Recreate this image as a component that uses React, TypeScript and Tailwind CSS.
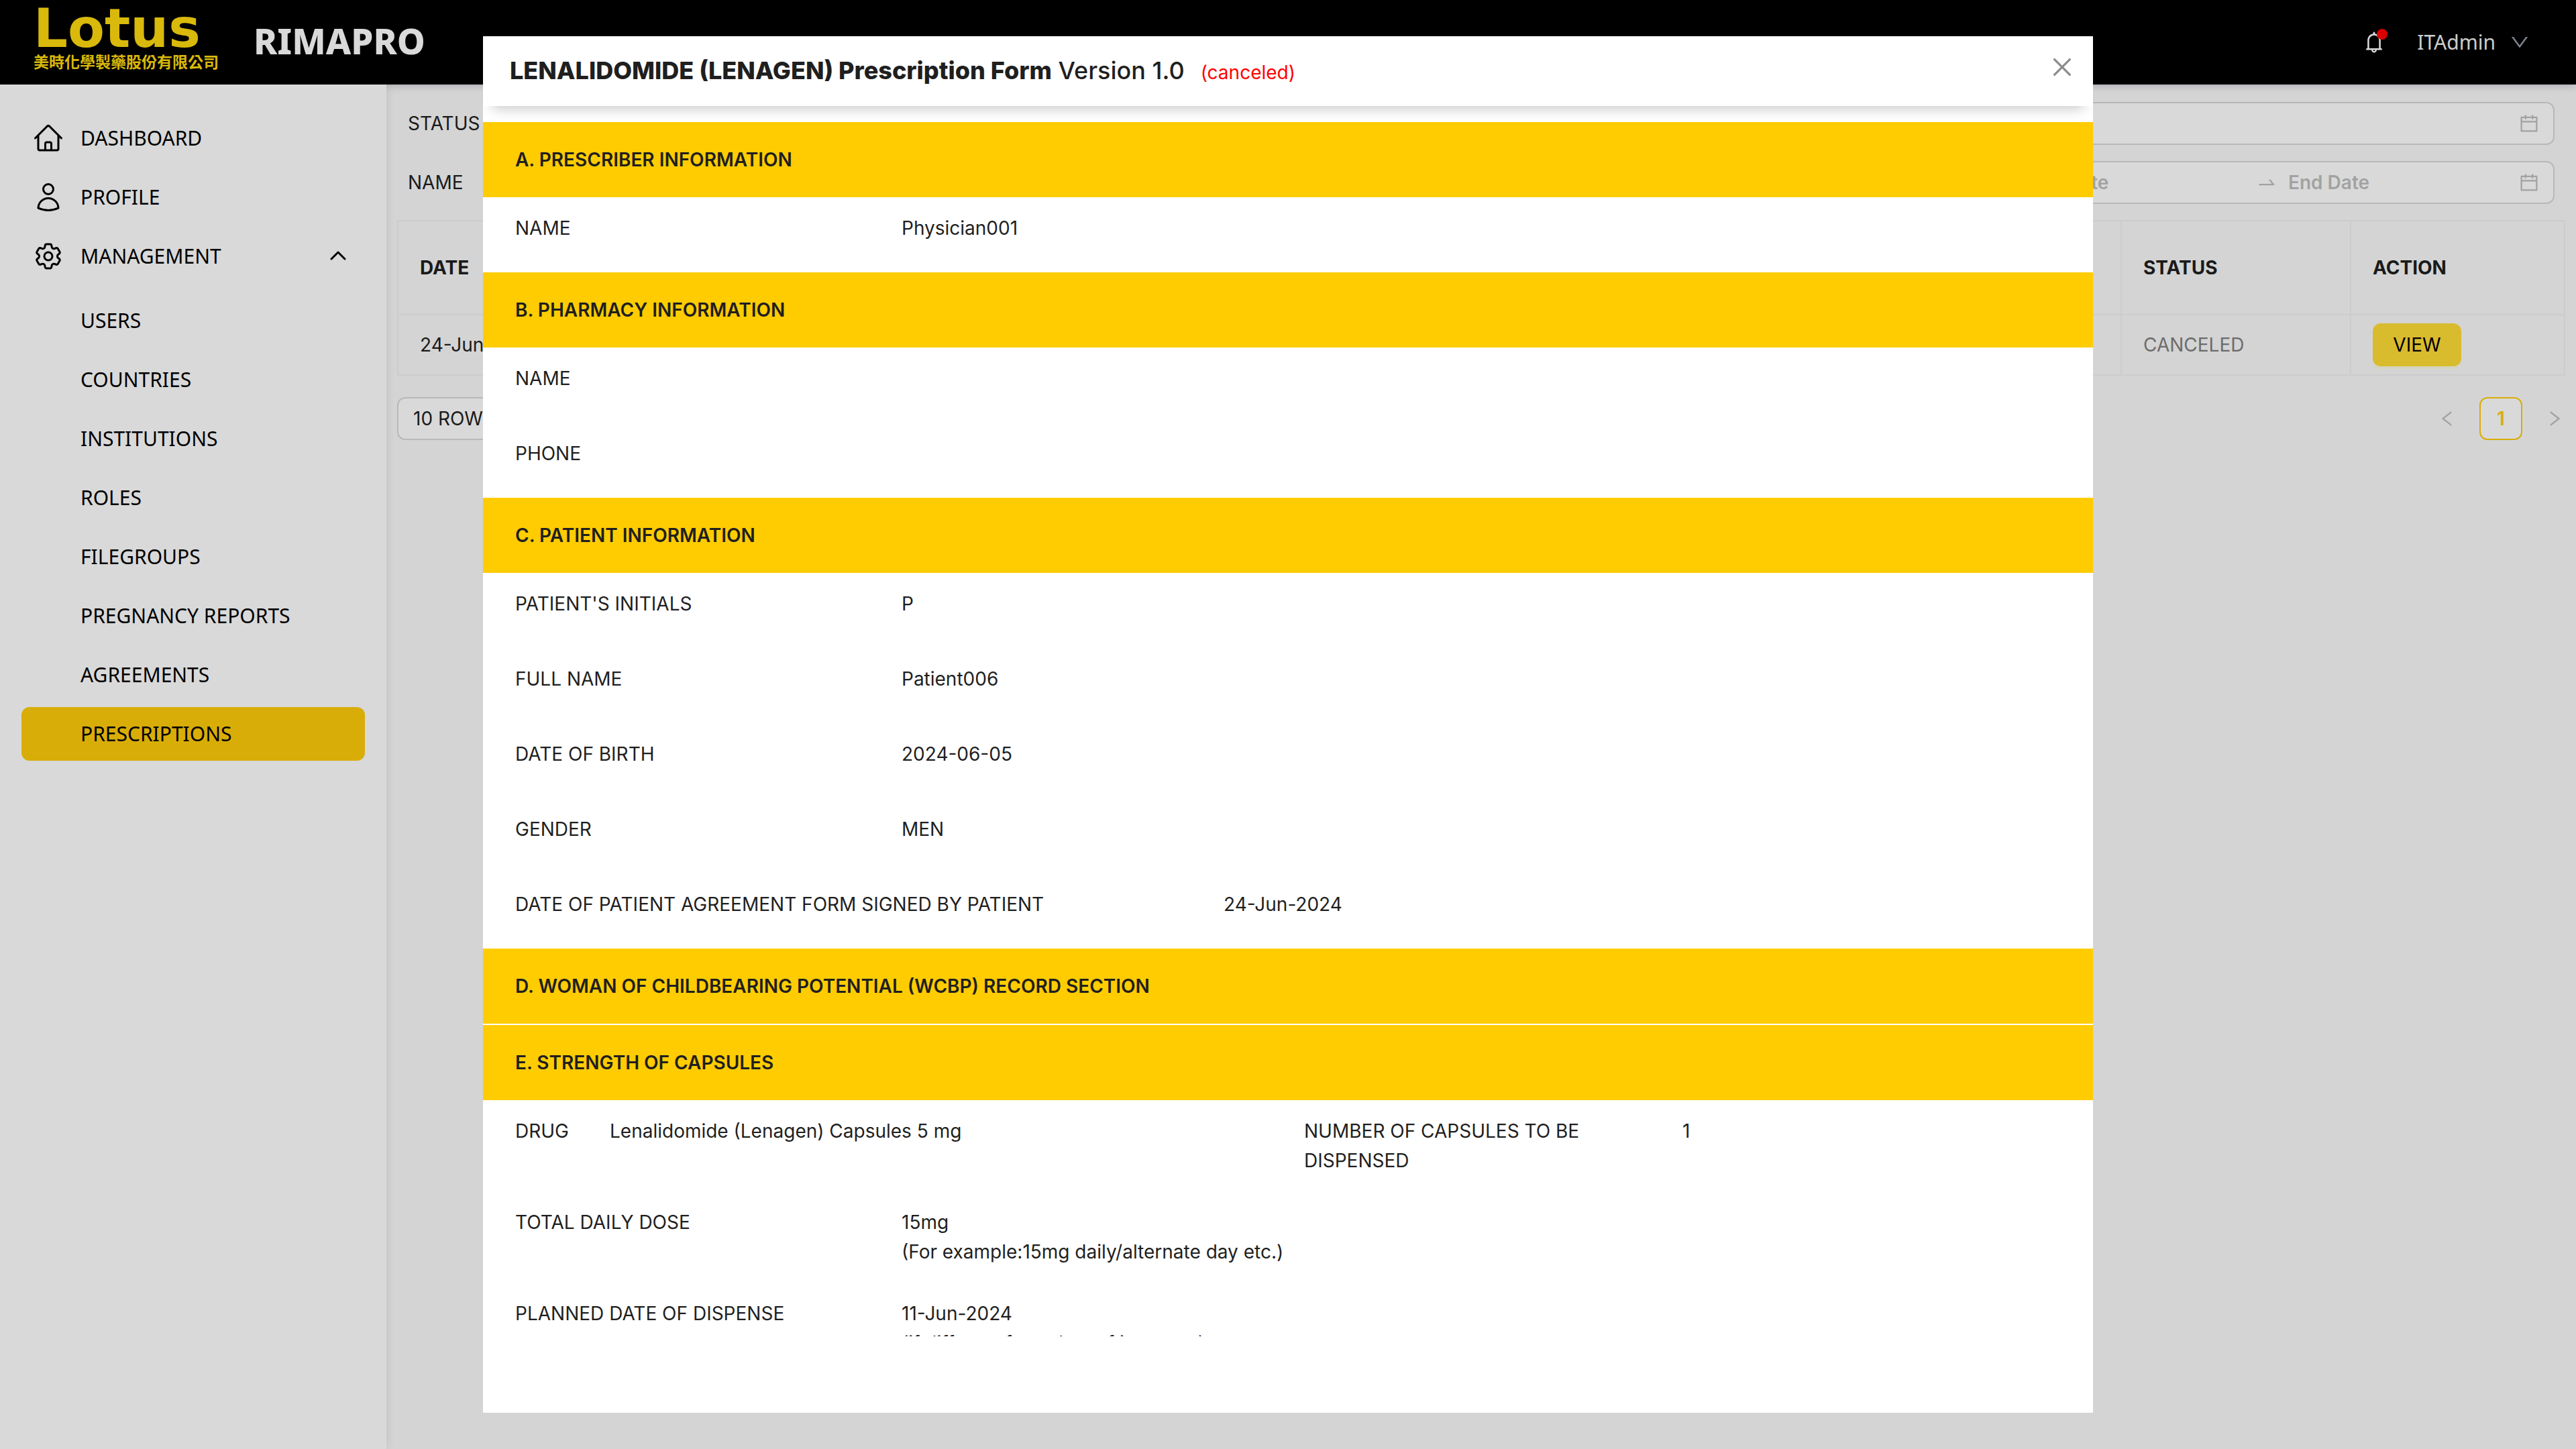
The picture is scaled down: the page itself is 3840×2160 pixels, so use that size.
import type { ReactNode } from "react";
import {
  HiOutlineHome,
  HiOutlineUser,
  HiOutlineCog6Tooth,
} from "react-icons/hi2";
import {
  AiOutlineBell,
  AiOutlineCalendar,
  AiOutlineClose,
  AiOutlineDown,
  AiOutlineLeft,
  AiOutlineRight,
  AiOutlineSwapRight,
} from "react-icons/ai";

const SUBMENU = [
  "USERS",
  "COUNTRIES",
  "INSTITUTIONS",
  "ROLES",
  "FILEGROUPS",
  "PREGNANCY REPORTS",
  "AGREEMENTS",
  "PRESCRIPTIONS",
];

function Header() {
  return (
    <header className="flex h-[126px] shrink-0 items-center justify-between bg-black pr-[68px] pl-[50px] font-['Noto_Sans',sans-serif] shadow-[0_2px_12px_rgba(0,0,40,0.2)]">
      <div className="flex items-center gap-[52px]">
        <a href="#home" className="flex w-[276px] flex-col pb-4 text-[#ffda0d]">
          <span className="font-['DejaVu_Sans',sans-serif] text-[80px] leading-[72px] font-bold">
            Lotus
          </span>
          <span className="font-['Noto_Sans_CJK_TC',sans-serif] text-[23px] leading-6 font-bold whitespace-nowrap">
            美時化學製藥股份有限公司
          </span>
        </a>
        <span className="pb-1 text-[53px] leading-[72px] font-extrabold text-white">RIMAPRO</span>
      </div>
      <div className="flex items-center">
        <button type="button" aria-label="Notifications" className="relative mr-[46px] text-white">
          <AiOutlineBell className="size-9" />
          <span className="absolute -top-[2px] -right-[2px] size-4 rounded-full bg-[#ff0000]" />
        </button>
        <button type="button" className="flex items-center gap-5 text-[30px] leading-10 text-[#f0f0f0]">
          ITAdmin
          <AiOutlineDown className="size-8 text-[#959ca8]" />
        </button>
      </div>
    </header>
  );
}

function NavItem({ icon, label }: { icon: ReactNode; label: string }) {
  return (
    <a href={"#" + label.toLowerCase()} className="flex h-20 items-center gap-6 pl-4">
      {icon}
      {label}
    </a>
  );
}

function Sidebar() {
  return (
    <nav className="w-[576px] shrink-0 bg-white px-8 pt-10 font-['Noto_Sans',sans-serif] text-[30px] leading-10 text-black shadow-[0_0_16px_rgba(0,0,0,0.1)]">
      <div className="flex flex-col gap-2">
        <NavItem icon={<HiOutlineHome className="size-12" />} label="DASHBOARD" />
        <NavItem icon={<HiOutlineUser className="size-12" />} label="PROFILE" />
        <button type="button" aria-expanded="true" className="flex h-20 items-center gap-6 pr-7 pl-4 text-left">
          <HiOutlineCog6Tooth className="size-12" />
          <span className="flex-1">MANAGEMENT</span>
          <svg viewBox="0 0 24 24" className="size-6" fill="none" stroke="currentColor" strokeWidth="3" strokeLinecap="round" strokeLinejoin="round">
            <path d="M2 16 12 6l10 10" />
          </svg>
        </button>
      </div>
      <ul className="mt-4 flex flex-col gap-2">
        {SUBMENU.map((item) => (
          <li key={item}>
            <a
              href={"#" + item.toLowerCase().replace(" ", "-")}
              className={
                item === "PRESCRIPTIONS"
                  ? "flex h-20 items-center rounded-xl bg-[#ffcc0a] pl-[88px]"
                  : "flex h-20 items-center pl-[88px]"
              }
            >
              {item}
            </a>
          </li>
        ))}
      </ul>
    </nav>
  );
}

function DateRange({ labelled }: { labelled: boolean }) {
  return (
    <div className="flex h-16 w-[826px] items-center rounded-xl border-2 border-[#d9d9d9] bg-white pr-5 pl-6 text-[#bfbfbf]">
      <input
        aria-label="Start date"
        placeholder={labelled ? "Start Date" : ""}
        className="w-0 flex-1 font-semibold outline-none placeholder:text-[#bfbfbf]"
      />
      {labelled && (
        <span className="flex w-16 justify-center">
          <AiOutlineSwapRight className="size-8" />
        </span>
      )}
      <input
        aria-label="End date"
        placeholder={labelled ? "End Date" : ""}
        className="w-0 flex-1 font-semibold outline-none placeholder:text-[#bfbfbf]"
      />
      <AiOutlineCalendar className="ml-1 size-8" />
    </div>
  );
}

const FIELD = "h-16 flex-1 rounded-xl border-2 border-[#d9d9d9] bg-white px-5";
const CELL = "border-2 border-[#f0f0f0] px-8";

function Content() {
  return (
    <main className="min-w-0 flex-1 pt-[26px] text-[28px] leading-[44px]">
      <div className="flex flex-col gap-6 px-8">
        <div className="flex items-center gap-8">
          <label htmlFor="status" className="w-[120px]">STATUS</label>
          <select id="status" className={FIELD} />
          <DateRange labelled={false} />
        </div>
        <div className="flex items-center gap-8">
          <label htmlFor="name" className="w-[120px]">NAME</label>
          <input id="name" className={FIELD} />
          <DateRange labelled />
        </div>
      </div>
      <div className="px-4 pt-6">
        <table className="w-full table-fixed border-collapse text-left">
          <thead>
            <tr className="h-[140px] font-semibold">
              <th className={CELL + " w-[280px]"}>DATE</th>
              <th className={CELL} />
              <th className={CELL + " w-[342px]"}>STATUS</th>
              <th className={CELL + " w-[319px]"}>ACTION</th>
            </tr>
          </thead>
          <tbody>
            <tr className="h-[90px]">
              <td className={CELL}>24-Jun-2024</td>
              <td className={CELL} />
              <td className={CELL + " text-[#7f7f7f]"}>CANCELED</td>
              <td className={CELL}>
                <button type="button" className="flex h-16 w-[132px] items-center justify-center rounded-xl bg-[#ffdc37] text-black shadow-[0_4px_0_rgba(255,245,5,0.1)]">
                  VIEW
                </button>
              </td>
            </tr>
          </tbody>
        </table>
      </div>
      <div className="flex justify-between pt-8 pl-4">
        <select aria-label="Rows per page" className="h-16 w-[240px] appearance-none rounded-xl border-2 border-[#d9d9d9] bg-white px-[22px]">
          <option>10 ROWS</option>
        </select>
        <div className="flex gap-4">
          <button type="button" aria-label="Previous page" className="flex size-16 items-center justify-center text-[#bfbfbf]">
            <AiOutlineLeft className="size-[30px]" />
          </button>
          <button type="button" className="size-16 rounded-xl border-2 border-[#ffcc0a] bg-white font-semibold text-[#ffcc0a]">
            1
          </button>
          <button type="button" aria-label="Next page" className="flex size-16 items-center justify-center text-[#bfbfbf]">
            <AiOutlineRight className="size-[30px]" />
          </button>
        </div>
      </div>
    </main>
  );
}

function Section({ title, children }: { title: string; children?: ReactNode }) {
  return (
    <section>
      <h3 className="flex h-28 items-center bg-[#ffcc02] px-12 font-semibold">{title}</h3>
      {children}
    </section>
  );
}

function Row({ label, wide, children }: { label: string; wide?: boolean; children?: ReactNode }) {
  return (
    <dl className="flex min-h-28 px-12 py-6">
      <dt className={wide ? "w-11/24 shrink-0" : "w-1/4 shrink-0"}>{label}</dt>
      <dd>{children}</dd>
    </dl>
  );
}

function PrescriptionDialog() {
  return (
    <div className="fixed inset-0 flex items-start justify-center bg-black/15 pt-[54px]">
      <div
        role="dialog"
        aria-modal="true"
        aria-labelledby="dialog-title"
        className="flex h-[95vh] w-full max-w-[2400px] flex-col bg-white pb-[114px] text-[28px] leading-[44px]"
      >
        <div className="flex h-[104px] shrink-0 items-center px-10 shadow-[0_18px_18px_-14px_rgba(0,0,0,0.22)]">
          <div className="flex items-baseline gap-6">
            <h2 id="dialog-title" className="text-[36px] font-medium">
              <strong className="font-extrabold">LENALIDOMIDE (LENAGEN) Prescription Form</strong> Version 1.0
            </h2>
            <span className="text-[#ff0000]">(canceled)</span>
          </div>
          <button type="button" aria-label="Close" className="-mr-[14px] mb-3 ml-auto text-[#8c8c8c]">
            <AiOutlineClose className="size-10" />
          </button>
        </div>
        <div className="min-h-0 flex-1 overflow-y-auto pt-6 [scrollbar-width:none]">
          <Section title="A. PRESCRIBER INFORMATION">
            <Row label="NAME">Physician001</Row>
          </Section>
          <Section title="B. PHARMACY INFORMATION">
            <Row label="NAME" />
            <Row label="PHONE" />
          </Section>
          <Section title="C. PATIENT INFORMATION">
            <Row label="PATIENT'S INITIALS">P</Row>
            <Row label="FULL NAME">Patient006</Row>
            <Row label="DATE OF BIRTH">2024-06-05</Row>
            <Row label="GENDER">MEN</Row>
            <Row label="DATE OF PATIENT AGREEMENT FORM SIGNED BY PATIENT" wide>
              24-Jun-2024
            </Row>
          </Section>
          <Section title="D. WOMAN OF CHILDBEARING POTENTIAL (WCBP) RECORD SECTION" />
          <div className="h-[2px]" />
          <Section title="E. STRENGTH OF CAPSULES">
            <div className="grid grid-cols-2 gap-12 px-12 py-6">
              <dl className="flex">
                <dt className="w-1/8 shrink-0">DRUG</dt>
                <dd>Lenalidomide (Lenagen) Capsules 5 mg</dd>
              </dl>
              <dl className="flex">
                <dt className="w-1/2 shrink-0 pr-12">NUMBER OF CAPSULES TO BE DISPENSED</dt>
                <dd>1</dd>
              </dl>
            </div>
            <Row label="TOTAL DAILY DOSE">
              15mg
              <br />
              (For example:15mg daily/alternate day etc.)
            </Row>
            <Row label="PLANNED DATE OF DISPENSE">
              11-Jun-2024
              <br />
              (if different from date of issuance)
            </Row>
          </Section>
        </div>
      </div>
    </div>
  );
}

export default function App() {
  return (
    <div className="flex min-h-screen flex-col bg-[#fafafa] font-[Inter,sans-serif] text-[#1f1f1f]">
      <Header />
      <div className="flex flex-1">
        <Sidebar />
        <Content />
      </div>
      <PrescriptionDialog />
    </div>
  );
}
